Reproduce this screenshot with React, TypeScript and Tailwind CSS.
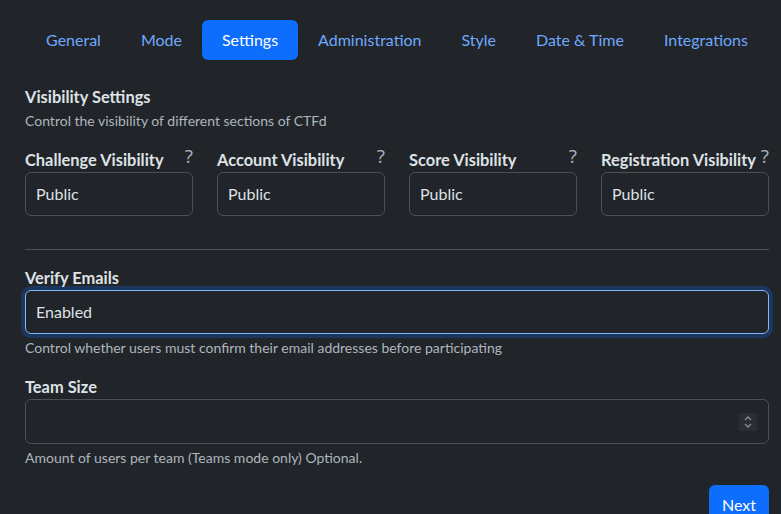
import React from "react";

const tabs = ["General", "Mode", "Settings", "Administration", "Style", "Date & Time", "Integrations"];
const vis = ["Challenge Visibility", "Account Visibility", "Score Visibility", "Registration Visibility"];

export default function App() {
  return (
    <div
      className="w-[781px] h-[514px] overflow-hidden bg-[#212529] text-[#dee2e6] pl-[25px] pr-[12px] pt-[20px]"
      style={{ fontFamily: "Lato, 'Open Sans', sans-serif" }}
    >
      <div className="flex justify-center">
        {tabs.map((t) => (
          <div
            key={t}
            className={
              t === "Settings"
                ? "px-[20px] py-[8px] leading-[24px] text-[16px] rounded-[6px] bg-[#0d6efd] text-white"
                : "px-[20px] py-[8px] leading-[24px] text-[16px] text-[#6ea8fe]"
            }
          >
            {t}
          </div>
        ))}
      </div>

      <div className="mt-[27px] text-[16.4px] font-bold leading-[20px]">Visibility Settings</div>
      <div className="mt-[5px] text-[14px] leading-[18px] text-[#adb5bd]">
        Control the visibility of different sections of CTFd
      </div>

      <div className="mt-[20px] grid grid-cols-4 gap-x-[24px]">
        {vis.map((v) => (
          <div key={v}>
            <div className="flex justify-between items-start h-[22px]">
              <span className="text-[16.4px] font-bold leading-[20px] whitespace-nowrap">{v}</span>
              <span
                className="text-[19px] leading-[18px] text-[#adb5bd] -mt-[3px]"
                style={{ fontFamily: "'Open Sans', sans-serif" }}
              >
                ?
              </span>
            </div>
            <div className="h-[44px] border border-[#495057] rounded-[6px] flex items-center px-[10px] text-[16px]">
              Public
            </div>
          </div>
        ))}
      </div>

      <div className="mt-[33px] h-px bg-[#495057]" />

      <div className="mt-[18px] text-[16.4px] font-bold leading-[20px]">Verify Emails</div>
      <div className="mt-[2px] h-[44px] border border-[#86b7fe] rounded-[6px] flex items-center px-[10px] text-[16px] shadow-[0_0_0_4px_rgba(13,110,253,0.25)]">
        Enabled
      </div>
      <div className="mt-[5px] text-[14px] leading-[18px] text-[#adb5bd]">
        Control whether users must confirm their email addresses before participating
      </div>

      <div className="mt-[20px] text-[16.4px] font-bold leading-[20px]">Team Size</div>
      <div className="mt-[2px] h-[45px] border border-[#495057] rounded-[6px] flex items-center justify-end pr-[11px]">
        <div className="w-[18px] h-[18px] bg-[#2c2d33] flex items-center justify-center">
          <svg width="10" height="14" viewBox="0 0 10 14" fill="none" stroke="#8b8d93" strokeWidth="1.4">
            <path d="M2 5 L5 2 L8 5" />
            <path d="M2 9 L5 12 L8 9" />
          </svg>
        </div>
      </div>
      <div className="mt-[5px] text-[14px] leading-[18px] text-[#adb5bd]">
        Amount of users per team (Teams mode only) Optional.
      </div>

      <div className="mt-[18px] flex justify-end">
        <div className="px-[13px] py-[8px] leading-[24px] text-[16px] rounded-[6px] bg-[#0d6efd] text-white">Next</div>
      </div>
    </div>
  );
}
